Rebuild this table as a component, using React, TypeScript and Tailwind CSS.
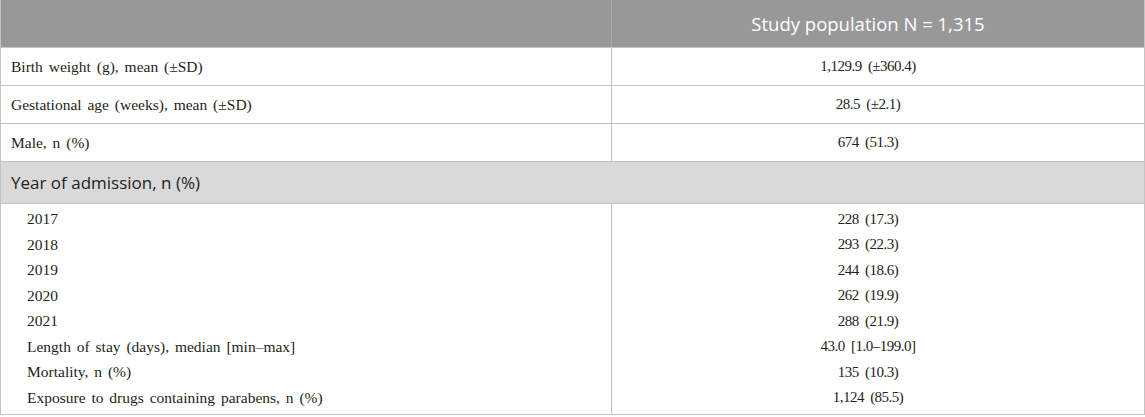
const rows = [
  { label: "Birth weight (g), mean (±SD)", value: "1,129.9 (±360.4)" },
  { label: "Gestational age (weeks), mean (±SD)", value: "28.5 (±2.1)" },
  { label: "Male, n (%)", value: "674 (51.3)" },
];

const subRows = [
  { label: "2017", value: "228 (17.3)" },
  { label: "2018", value: "293 (22.3)" },
  { label: "2019", value: "244 (18.6)" },
  { label: "2020", value: "262 (19.9)" },
  { label: "2021", value: "288 (21.9)" },
  { label: "Length of stay (days), median [min–max]", value: "43.0 [1.0–199.0]" },
  { label: "Mortality, n (%)", value: "135 (10.3)" },
  { label: "Exposure to drugs containing parabens, n (%)", value: "1,124 (85.5)" },
];

const serif = "font-['Liberation_Serif',serif] text-[15.5px] text-[#231f20] [word-spacing:2px]";
const num = "font-['Liberation_Serif',serif] text-[15px] text-[#231f20] tracking-[-0.5px] [word-spacing:3px]";
const sans = "font-['Open_Sans',sans-serif]";

export default function App() {
  return (
    <div className="w-[1145px] h-[417px] bg-white">
      <div className="w-[1145px] border-x border-b border-[#c3c3c3]">
        <div className="flex h-[48px] bg-[#989898] border-b border-[#c3c3c3]">
          <div className="w-[610px]" />
          <div className={`flex-1 flex items-center justify-center pr-[20px] border-l border-[#a9a9a9] text-white text-[18.5px] ${sans}`}>
            Study population N = 1,315
          </div>
        </div>

        {rows.map((r) => (
          <div key={r.label} className="flex h-[38px] border-b border-[#c3c3c3]">
            <div className={`w-[610px] flex items-center pl-[10px] ${serif}`}>{r.label}</div>
            <div className={`flex-1 flex items-center justify-center pr-[20px] border-l border-[#c3c3c3] ${num}`}>{r.value}</div>
          </div>
        ))}

        <div className={`flex items-center h-[42px] bg-[#d9d9d9] border-b border-[#c3c3c3] pl-[10px] text-[17px] text-[#231f20] ${sans}`}>
          Year of admission, n (%)
        </div>

        <div className="flex">
          <div className="w-[610px] flex flex-col pt-[2px] pb-[4px]">
            {subRows.map((r) => (
              <div key={r.label} className={`h-[25.5px] flex items-center pl-[26px] ${serif}`}>{r.label}</div>
            ))}
          </div>
          <div className="flex-1 flex flex-col pt-[2px] pb-[4px] pr-[20px] border-l border-[#c3c3c3]">
            {subRows.map((r) => (
              <div key={r.label} className={`h-[25.5px] flex items-center justify-center ${num}`}>{r.value}</div>
            ))}
          </div>
        </div>
      </div>
    </div>
  );
}
